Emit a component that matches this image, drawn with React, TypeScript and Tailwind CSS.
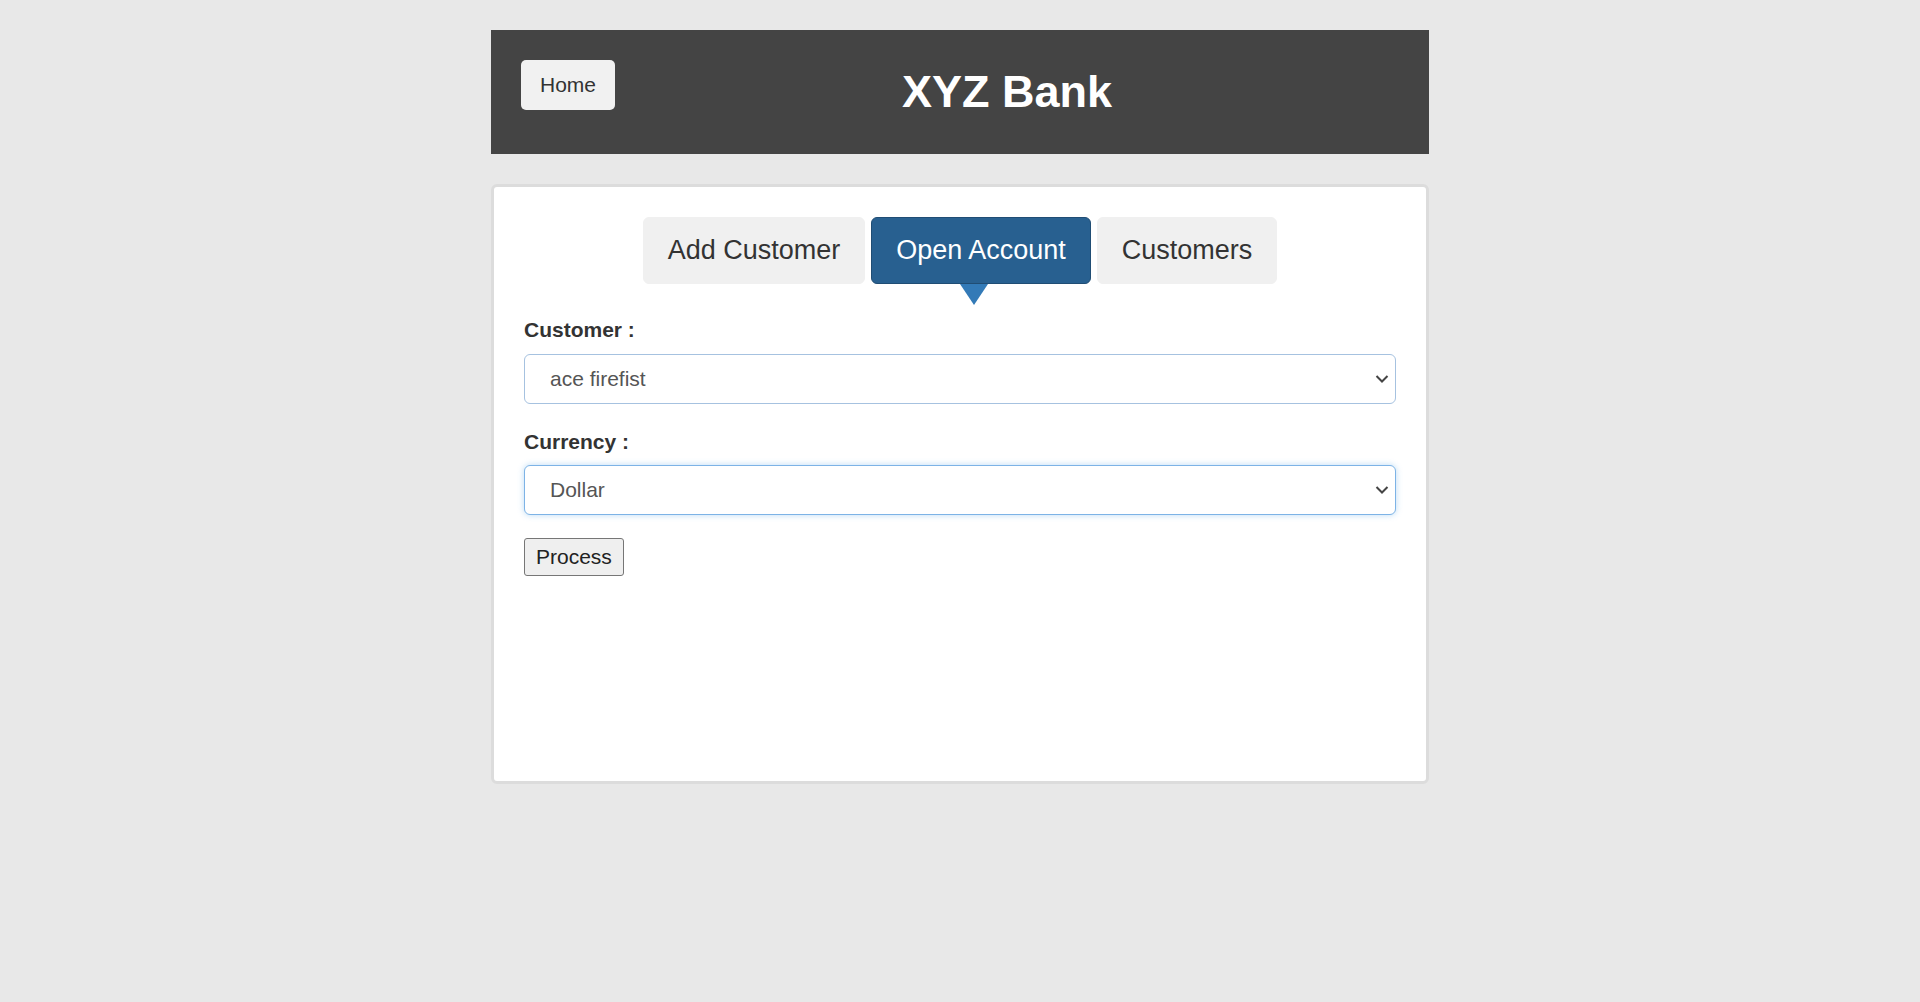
import { useState } from 'react'

const tabs = ['Add Customer', 'Open Account', 'Customers']

function Chevron() {
  return (
    <svg
      className="pointer-events-none absolute right-[7px] top-1/2 -translate-y-1/2"
      width="14"
      height="9"
      viewBox="0 0 14 9"
      fill="none"
    >
      <path d="M1.5 1.5L7 7L12.5 1.5" stroke="#444" strokeWidth="2" />
    </svg>
  )
}

export default function App() {
  const [active] = useState('Open Account')
  const [customer, setCustomer] = useState('ace firefist')
  const [currency, setCurrency] = useState('Dollar')

  return (
    <div className="min-h-[1002px] bg-[#e8e8e8] pt-[30px] font-['Liberation_Sans',Arial,sans-serif] text-[#333]">
      <div className="mx-auto w-[938px]">
        {/* header */}
        <div className="flex h-[124px] items-start bg-[#444] px-[30px] pt-[30px]">
          <button className="flex h-[50px] w-[94px] items-center justify-center rounded-[5px] bg-[#f1f1f1] text-[21px] text-[#333]">
            Home
          </button>
          <div className="mt-[7px] flex-1 text-center text-[45px] font-bold leading-[50px] text-white">XYZ Bank</div>
        </div>

        {/* main card */}
        <div className="mt-[30px] h-[600px] rounded-[6px] border-[3px] border-[#dcdcdc] bg-white px-[30px] pt-[30px]">
          <div className="flex justify-center gap-[6px]">
            {tabs.map((t) =>
              t === active ? (
                <div key={t} className="relative">
                  <button className="h-[67px] rounded-[6px] border border-[#204d74] bg-[#286090] px-[24px] text-[27px] text-white">
                    {t}
                  </button>
                  <div className="absolute left-[89px] top-full h-0 w-0 border-x-[14px] border-t-[21px] border-x-transparent border-t-[#337ab7]"></div>
                </div>
              ) : (
                <button
                  key={t}
                  className="h-[67px] rounded-[6px] border border-[#f0f0f0] bg-[#f0f0f0] px-[24px] text-[27px] text-[#333]"
                >
                  {t}
                </button>
              )
            )}
          </div>

          <div className="mt-[31px]">
            <label className="mb-[9px] block text-[21px] font-bold leading-[30px]">Customer :</label>
            <div className="relative">
              <select
                value={customer}
                onChange={(e) => setCustomer(e.target.value)}
                className="h-[50px] w-full appearance-none rounded-[6px] border border-[#a6c2e0] bg-white pl-[25px] text-[21px] text-[#555] outline-none"
              >
                <option>ace firefist</option>
              </select>
              <Chevron />
            </div>

            <label className="mb-[8px] mt-[23px] block text-[21px] font-bold leading-[30px]">Currency :</label>
            <div className="relative">
              <select
                value={currency}
                onChange={(e) => setCurrency(e.target.value)}
                className="h-[50px] w-full appearance-none rounded-[6px] border border-[#7db3e6] bg-white pl-[25px] text-[21px] text-[#555] shadow-[0_0_6px_rgba(102,175,233,0.45)] outline-none"
              >
                <option>Dollar</option>
                <option>Pound</option>
                <option>Rupee</option>
              </select>
              <Chevron />
            </div>

            <button className="mt-[23px] h-[38px] rounded-[3px] border border-[#767676] bg-[#efefef] px-[11px] text-[21px] text-[#222]">
              Process
            </button>
          </div>
        </div>
      </div>
    </div>
  )
}
